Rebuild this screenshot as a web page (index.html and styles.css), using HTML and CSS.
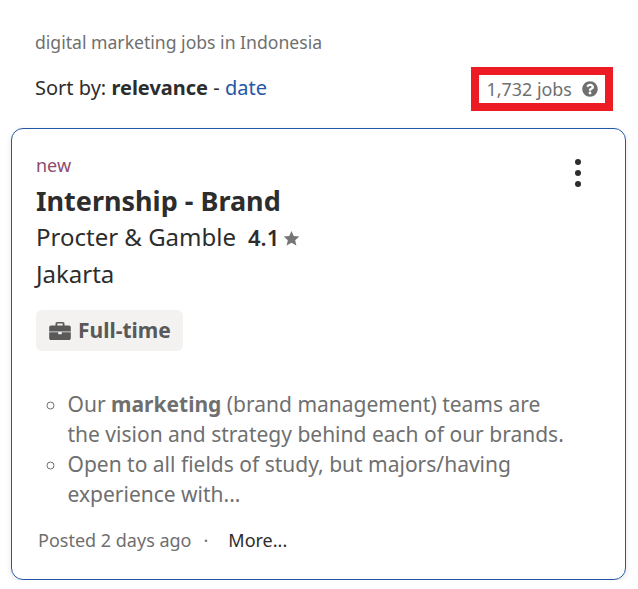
FILE: index.html
```html
<!DOCTYPE html>
<html lang="en">
<head>
    <meta charset="UTF-8">
    <meta name="viewport" content="width=device-width, initial-scale=1.0">
    <title>digital marketing jobs in Indonesia</title>
    <link rel="stylesheet" href="styles.css">
</head>
<body>
    <div class="results-head">
        <h1 class="query">digital marketing jobs in Indonesia</h1>
        <div class="sort-row">
            <div class="sort">Sort by: <strong>relevance</strong> - <a href="#">date</a></div>
            <div class="job-count">
                <span>1,732 jobs</span>
                <svg class="help" viewBox="0 0 512 512" fill="currentColor">
                    <path d="M504 256c0 137-111 248-248 248S8 393 8 256 119 8 256 8s248 111 248 248zM263 90c-54 0-89 23-116 64-4 5-3 12 3 16l35 26c5 4 13 3 17-2 18-23 30-36 58-36 21 0 46 13 46 33 0 15-12 23-33 34-23 13-54 30-54 71v6c0 7 5 12 12 12h56c7 0 12-5 12-12v-2c0-29 84-30 84-107 0-59-61-103-120-103zm-7 248c-26 0-46 21-46 46s20 46 46 46 46-21 46-46-20-46-46-46z"/>
                </svg>
            </div>
        </div>
    </div>

    <div class="job-card">
        <button class="menu" aria-label="More options"><i></i><i></i><i></i></button>
        <div class="new">new</div>
        <h2 class="job-title">Internship - Brand</h2>
        <div class="company">
            <span>Procter &amp; Gamble</span>
            <span class="rating">4.1</span>
            <svg class="star" viewBox="0 0 24 24" fill="currentColor">
                <path d="M12 1.500l3.200 7 7.800.8-5.800 5.100 1.700 7.600L12 18l-6.900 4 1.700-7.600L1 9.300l7.800-.8z"/>
            </svg>
        </div>
        <div class="location">Jakarta</div>
        <div class="tag">
            <svg class="briefcase" viewBox="0 0 24 20" fill="currentColor">
                <path d="M9 0h6c1.100 0 2 .9 2 2v2h5c1.100 0 2 .9 2 2v4.500H0V6c0-1.100.9-2 2-2h5V2c0-1.100.9-2 2-2zm0 1.800V4h6V1.800H9z"/>
                <path d="M0 11.300h10v1.700c0 .3.200.5.500.5h3c.3 0 .5-.2.500-.5v-1.700h10V18c0 1.100-.9 2-2 2H2c-1.100 0-2-.9-2-2z"/>
            </svg>
            Full-time
        </div>
        <ul class="snippet">
            <li>Our <b>marketing</b> (brand management) teams are the vision and strategy behind each of our brands.</li>
            <li>Open to all fields of study, but majors/having experience with...</li>
        </ul>
        <div class="card-foot">
            <span class="posted">Posted 2 days ago</span>
            <span class="dot">·</span>
            <a class="more" href="#">More...</a>
        </div>
    </div>
</body>
</html>
```

FILE: styles.css
```css
* {
    margin: 0;
    padding: 0;
    box-sizing: border-box;
}

body {
    font-family: "Noto Sans", sans-serif;
    background: #fff;
    color: #2d2d2d;
    padding: 30px 12px 0 11px;
}

.results-head {
    padding: 0 13px 0 24px;
}

.query {
    font-size: 17.6px;
    font-weight: 400;
    line-height: 24px;
    color: #6f6f6f;
}

.sort-row {
    display: flex;
    justify-content: space-between;
    align-items: center;
    margin-top: 13px;
    margin-bottom: 17px;
}

.sort {
    margin-top: -2px;
    font-size: 20px;
    line-height: 28px;
    color: #2d2d2d;
}

.sort a {
    color: #2557a7;
    text-decoration: none;
}

.job-count {
    display: flex;
    align-items: center;
    gap: 10px;
    height: 44px;
    width: 142px;
    border: 8px solid #ed1c24;
    padding-left: 7.5px;
    font-size: 17.9px;
    color: #6f6f6f;
}

.help {
    width: 16px;
    height: 16px;
}

.job-card {
    position: relative;
    height: 452px;
    width: 615px;
    padding: 24px 24px 0;
    border: 1px solid #2557a7;
    border-radius: 12px;
    box-shadow: 0 2px 6px rgba(0, 0, 0, 0.1);
}

.menu {
    position: absolute;
    top: 30px;
    right: 44px;
    display: flex;
    flex-direction: column;
    gap: 5px;
    border: none;
    background: none;
}

.menu i {
    width: 6px;
    height: 6px;
    border-radius: 50%;
    background: #2d2d2d;
}

.new {
    font-size: 18px;
    line-height: 24px;
    color: #8f4a6f;
}

.job-title {
    margin-top: 6px;
    font-size: 27px;
    line-height: 36px;
    font-weight: 700;
    color: #2d2d2d;
}

.company {
    display: flex;
    align-items: center;
    font-size: 24px;
    line-height: 36px;
    color: #2d2d2d;
}

.rating {
    margin-left: 12px;
    font-size: 22px;
    font-weight: 600;
}

.star {
    width: 17px;
    height: 17px;
    margin-left: 4px;
    margin-top: 2px;
    color: #767676;
}

.location {
    margin-top: -1px;
    font-size: 24px;
    line-height: 40px;
    color: #2d2d2d;
}

.tag {
    display: inline-flex;
    align-items: center;
    gap: 7px;
    height: 41px;
    margin-top: 16px;
    padding: 0 12px 2px 13px;
    border-radius: 6px;
    background: #f3f2f1;
    color: #595959;
    font-size: 21px;
    font-weight: 700;
}

.briefcase {
    width: 22px;
    height: 18px;
    margin-top: 2px;
}

.snippet {
    margin-top: 38px;
    padding-left: 31.500px;
    list-style: circle;
    font-size: 21px;
    line-height: 30px;
    color: #6f6f6f;
    max-width: 535px;
}

.card-foot {
    display: flex;
    align-items: center;
    margin-top: 19px;
    margin-left: 2px;
    font-size: 18px;
    line-height: 24px;
}

.posted {
    color: #6f6f6f;
}

.dot {
    margin-left: 12px;
    color: #6f6f6f;
}

.more {
    margin-left: 20px;
    color: #2d2d2d;
    text-decoration: none;
}
```
